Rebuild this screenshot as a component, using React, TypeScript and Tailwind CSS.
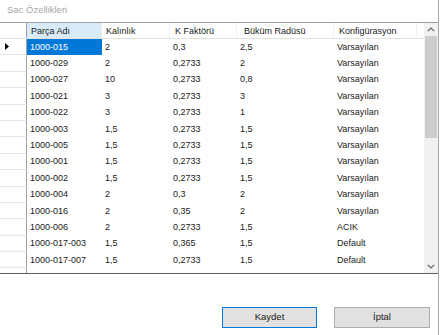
const cols = [
  { label: 'Parça Adı', w: 'w-[75px]', hp: 'pl-[4px]', head: 'bg-[#d9ebf9]' },
  { label: 'Kalınlık', w: 'w-[68px]', hp: 'pl-[4px]', head: '' },
  { label: 'K Faktörü', w: 'w-[67px]', hp: 'pl-[5px]', head: '' },
  { label: 'Büküm Radüsü', w: 'w-[97px]', hp: 'pl-[7px]', head: '' },
  { label: 'Konfigürasyon', w: 'w-[83px]', hp: 'pl-[5px]', head: '' },
];

const rows: string[][] = [
  ['1000-015', '2', '0,3', '2,5', 'Varsayılan'],
  ['1000-029', '2', '0,2733', '2', 'Varsayılan'],
  ['1000-027', '10', '0,2733', '0,8', 'Varsayılan'],
  ['1000-021', '3', '0,2733', '3', 'Varsayılan'],
  ['1000-022', '3', '0,2733', '1', 'Varsayılan'],
  ['1000-003', '1,5', '0,2733', '1,5', 'Varsayılan'],
  ['1000-005', '1,5', '0,2733', '1,5', 'Varsayılan'],
  ['1000-001', '1,5', '0,2733', '1,5', 'Varsayılan'],
  ['1000-002', '1,5', '0,2733', '1,5', 'Varsayılan'],
  ['1000-004', '2', '0,3', '2', 'Varsayılan'],
  ['1000-016', '2', '0,35', '2', 'Varsayılan'],
  ['1000-006', '2', '0,2733', '1,5', 'ACIK'],
  ['1000-017-003', '1,5', '0,365', '1,5', 'Default'],
  ['1000-017-007', '1,5', '0,2733', '1,5', 'Default'],
];

function ScrollBar() {
  return (
    <div className="flex w-[14px] flex-col bg-[#f0f0f0]">
      <div className="flex h-[13px] items-center justify-center">
        <svg width="8" height="5" viewBox="0 0 8 5"><path d="M0.8 4.2 L4 1 L7.2 4.2" fill="none" stroke="#606060" strokeWidth="1.2" /></svg>
      </div>
      <div className="mx-[1px] h-[102px] bg-[#cdcdcd]" />
      <div className="flex-1" />
      <div className="flex h-[13px] items-center justify-center">
        <svg width="8" height="5" viewBox="0 0 8 5"><path d="M0.8 0.8 L4 4 L7.2 0.8" fill="none" stroke="#606060" strokeWidth="1.2" /></svg>
      </div>
    </div>
  );
}

export default function App() {
  return (
    <div className="h-[335px] w-[440px] bg-white text-[9px] text-[#1a1a1a]" style={{ fontFamily: '"Liberation Sans", Arial, sans-serif' }}>
      <div className="flex h-[335px] w-[439px] flex-col border-r border-[#a8a8a8]">
        <div className="flex h-[22px] items-start pl-[7px] pt-[3px] text-[9.5px] text-[#a6a6a6]">Sac Özellikleri</div>

        {/* grid */}
        <div className="flex h-[252px] border-t border-[#a0a0a0] border-b border-b-[#5f5f5f]">
          <div className="flex flex-1 flex-col">
            <div className="flex h-[16px] border-b border-[#e3e3e3]">
              <div className="w-[27px] border-r border-[#a0a0a0]" />
              {cols.map((c, i) => (
                <div key={i} className={`${c.w} ${c.hp} ${c.head} flex items-center border-r border-[#f0f0f0] pt-[1px] leading-none`}>
                  {c.label}
                </div>
              ))}
            </div>
            {rows.map((r, ri) => (
              <div key={ri} className="flex h-[16.4px]">
                <div className="flex w-[27px] items-center border-r border-b border-[#a0a0a0] border-b-[#e6e6e6] pl-[5px]">
                  {ri === 0 && (
                    <svg width="4" height="7" viewBox="0 0 4 7"><path d="M0 0 L4 3.5 L0 7 Z" fill="#000" /></svg>
                  )}
                </div>
                {r.map((v, ci) => (
                  <div
                    key={ci}
                    className={`${cols[ci].w} flex items-center pl-[3px] leading-none ${ri === 0 && ci === 0 ? 'bg-[#0078d7] text-white' : ''}`}
                  >
                    {v}
                  </div>
                ))}
              </div>
            ))}
            <div className="flex flex-1">
              <div className="w-[27px] border-r border-[#a0a0a0]" />
            </div>
          </div>
          <ScrollBar />
        </div>

        {/* buttons */}
        <div className="flex flex-1 items-start justify-end gap-[17px] pr-[8px] pt-[33px] text-[9.5px] font-normal text-[#1a1a1a]">
          <button className="flex h-[21px] w-[95px] items-center justify-center border border-[#0078d7] bg-[#e1e1e1] font-normal">Kaydet</button>
          <button className="flex h-[21px] w-[96px] items-center justify-center border border-[#adadad] bg-[#e1e1e1] font-normal">İptal</button>
        </div>
      </div>
    </div>
  );
}
